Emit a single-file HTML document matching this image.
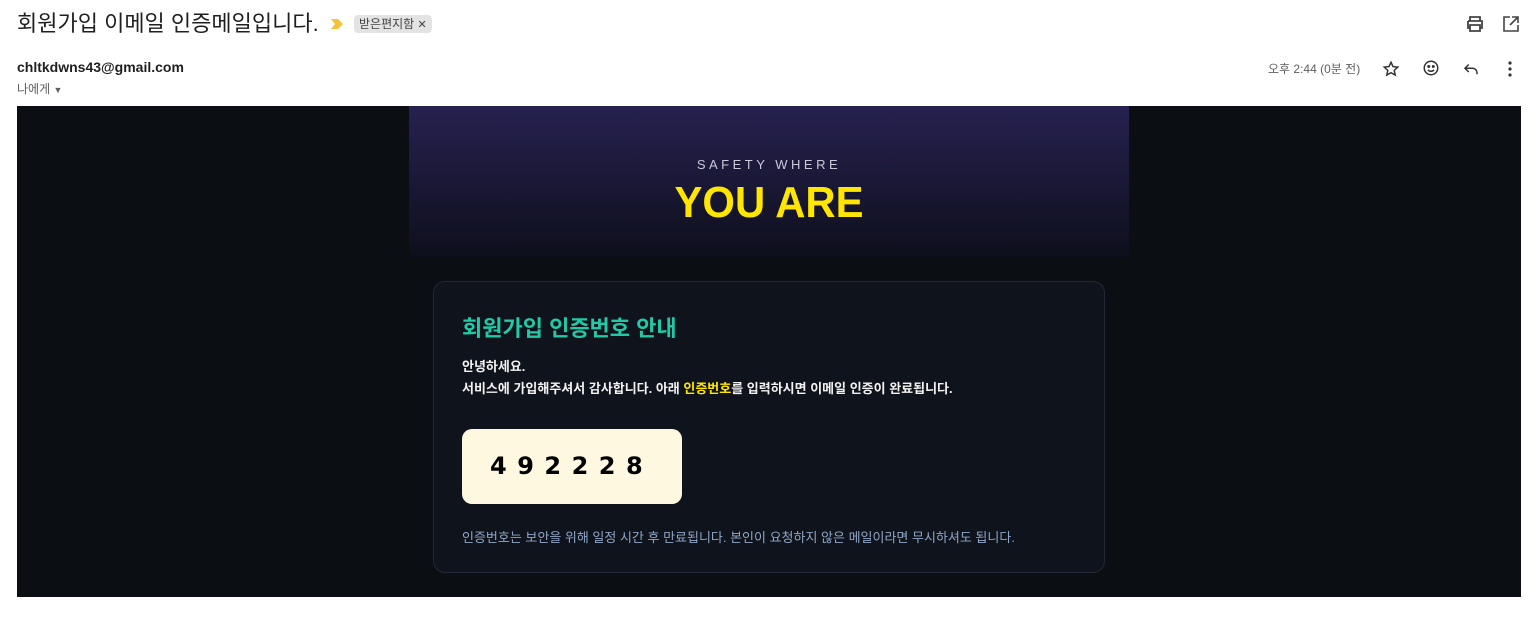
<!DOCTYPE html>
<html><head><meta charset="utf-8"><style>
body{margin:0;width:1540px;height:627px;background:#fff;font-family:"Liberation Sans","Noto Sans CJK KR",sans-serif;position:relative;overflow:hidden}
.abs{position:absolute}
.ic{position:absolute}
</style></head><body>
<div class="abs" style="left:17px;top:8px;font-size:22px;color:#1f1f1f;line-height:32px">회원가입 이메일 인증메일입니다.</div>
<svg class="ic" style="left:329px;top:17px" width="16" height="14" viewBox="0 0 16 14"><path d="M2 2h7l5 5-5 5H2l4-5z" fill="#f5c33b"/></svg>
<div class="abs" style="left:354px;top:15px;height:18px;padding:0 5px;background:#e3e3e3;border-radius:4px;font-size:12px;color:#444;line-height:18px">받은편지함 <span style="font-size:11px">✕</span></div>
<svg class="ic" style="left:1465px;top:15px" width="20" height="18" viewBox="0 0 20 18" fill="none" stroke="#444" stroke-width="1.8"><path d="M5 6V2h10v4M3 6h14v7h-2M5 13H3V6M5 10h10v6H5z"/></svg>
<svg class="ic" style="left:1503px;top:16px" width="16" height="16" viewBox="0 0 16 16" fill="none" stroke="#444" stroke-width="1.6"><path d="M7 1H1v14h14V9M9 1h6v6M15 1L7 9"/></svg>
<div class="abs" style="left:17px;top:59px;font-size:14px;font-weight:bold;color:#1f1f1f">chltkdwns43@gmail.com</div>
<div class="abs" style="left:17px;top:80px;font-size:12px;color:#5e5e5e">나에게 <span style="font-size:9px">▼</span></div>
<div class="abs" style="left:1268px;top:60px;font-size:12px;color:#5e5e5e">오후 2:44 (0분 전)</div>
<svg class="ic" style="left:1382px;top:60px" width="18" height="18" viewBox="0 0 24 24" fill="none" stroke="#333" stroke-width="2"><path d="M12 3l2.7 5.8 6.3.7-4.7 4.3 1.3 6.2L12 16.9 6.4 20l1.3-6.2L3 9.5l6.3-.7z"/></svg>
<svg class="ic" style="left:1422px;top:59px" width="18" height="18" viewBox="0 0 24 24" fill="none" stroke="#333" stroke-width="2"><circle cx="12" cy="12" r="9"/><circle cx="9" cy="10" r="1" fill="#333"/><circle cx="15" cy="10" r="1" fill="#333"/><path d="M8 14.5c2 2.5 6 2.5 8 0"/></svg>
<svg class="ic" style="left:1462px;top:60px" width="18" height="18" viewBox="0 0 24 24" fill="none" stroke="#333" stroke-width="2"><path d="M9 6L4 11l5 5M4 11h10a6 6 0 0 1 6 6v2"/></svg>
<svg class="ic" style="left:1506px;top:60px" width="8" height="18" viewBox="0 0 8 18" fill="#333"><circle cx="4" cy="3" r="1.6"/><circle cx="4" cy="9" r="1.6"/><circle cx="4" cy="15" r="1.6"/></svg>
<div class="abs" style="left:17px;top:106px;width:1504px;height:491px;background:#0b0e13"></div>
<div class="abs" style="left:409px;top:106px;width:720px;height:151px;background:linear-gradient(#262150,#0e0f1c);text-align:center">
<div style="margin-top:51px;font-size:13px;letter-spacing:3.5px;color:#c8c8d8">SAFETY WHERE</div>
<div style="margin-top:6px;font-size:44px;font-weight:bold;color:#ffe600;line-height:50px;font-family:'Liberation Sans',sans-serif;transform:scaleX(0.95)">YOU ARE</div>
</div>
<div class="abs" style="left:433px;top:281px;width:670px;height:290px;background:#0f131b;border:1px solid #222834;border-radius:12px"></div>
<div class="abs" style="left:462px;top:311px;font-size:22px;font-weight:bold;color:#22c9a6">회원가입 인증번호 안내</div>
<div class="abs" style="left:462px;top:356px;font-size:13px;font-weight:bold;color:#f2f2f2;line-height:22px">안녕하세요.<br>서비스에 가입해주셔서 감사합니다. 아래 <span style="color:#ffe600">인증번호</span>를 입력하시면 이메일 인증이 완료됩니다.</div>
<div class="abs" style="left:462px;top:429px;width:220px;height:75px;background:#fff8e1;border-radius:10px"></div>
<div class="abs" style="left:490px;top:452px;font-size:24px;font-weight:bold;color:#000;letter-spacing:10.5px;font-family:'DejaVu Sans',sans-serif">492228</div>
<div class="abs" style="left:462px;top:527px;font-size:13px;color:#8fa6c8">인증번호는 보안을 위해 일정 시간 후 만료됩니다. 본인이 요청하지 않은 메일이라면 무시하셔도 됩니다.</div>
</body></html>
